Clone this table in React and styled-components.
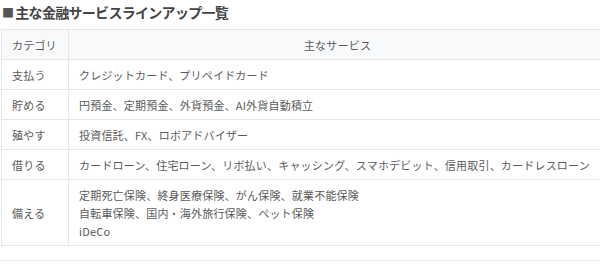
import React from "react";
import styled, { createGlobalStyle } from "styled-components";

const Global = createGlobalStyle`
  html, body { margin: 0; padding: 0; background: #fff; overflow: hidden; }
  body { font-family: "Noto Sans CJK JP", "Noto Sans", sans-serif; }
`;

const Page = styled.div`
  width: 600px;
  padding: 0 0 0 1px;
  box-sizing: border-box;
  overflow: hidden;
`;

const Title = styled.h2`
  margin: 0 0 7px 1px;
  padding-top: 2px;
  height: 20px;
  font-size: 14px;
  line-height: 20px;
  font-weight: 700;
  letter-spacing: -0.7px;
  color: #444;
  white-space: nowrap;
`;

const Square = styled.span`
  font-size: 12px;
  line-height: 0;
  color: #555;
  margin-right: 2px;
`;

const Table = styled.table`
  width: 606px;
  border-collapse: collapse;
  font-size: 11px;
  letter-spacing: 0.2px;
  color: #5a5a5a;
`;

const Cell = styled.td`
  border: 1px solid #e6e6e8;
  padding: 5.5px 10px;
  line-height: 18px;
  vertical-align: middle;
  text-align: ${(p) => (p.$center ? "center" : "left")};
  white-space: nowrap;
  background: ${(p) => (p.$head ? "#f8f9fb" : "#fff")};
  width: ${(p) => (p.$cat ? "46px" : "auto")};
  font-weight: 400;
`;

const Rule = styled.div`
  margin-top: 14px;
  height: 1px;
  background: #e6e6ec;
  width: 100%;
`;

const rows = [
  ["支払う", ["クレジットカード、プリペイドカード"]],
  ["貯める", ["円預金、定期預金、外貨預金、AI外貨自動積立"]],
  ["殖やす", ["投資信託、FX、ロボアドバイザー"]],
  ["借りる", ["カードローン、住宅ローン、リボ払い、キャッシング、スマホデビット、信用取引、カードレスローン"]],
  ["備える", ["定期死亡保険、終身医療保険、がん保険、就業不能保険", "自転車保険、国内・海外旅行保険、ペット保険", "iDeCo"]],
];

export default function App() {
  return (
    <>
      <Global />
      <Page>
        <Title><Square>■</Square>主な金融サービスラインアップ一覧</Title>
        <Table>
          <thead>
            <tr>
              <Cell as="th" $head $cat>カテゴリ</Cell>
              <Cell as="th" $head $center>主なサービス</Cell>
            </tr>
          </thead>
          <tbody>
            {rows.map(([cat, lines]) => (
              <tr key={cat}>
                <Cell $cat>{cat}</Cell>
                <Cell>
                  {lines.map((l, i) => (
                    <div key={i}>{l}</div>
                  ))}
                </Cell>
              </tr>
            ))}
          </tbody>
        </Table>
        <Rule />
      </Page>
    </>
  );
}
